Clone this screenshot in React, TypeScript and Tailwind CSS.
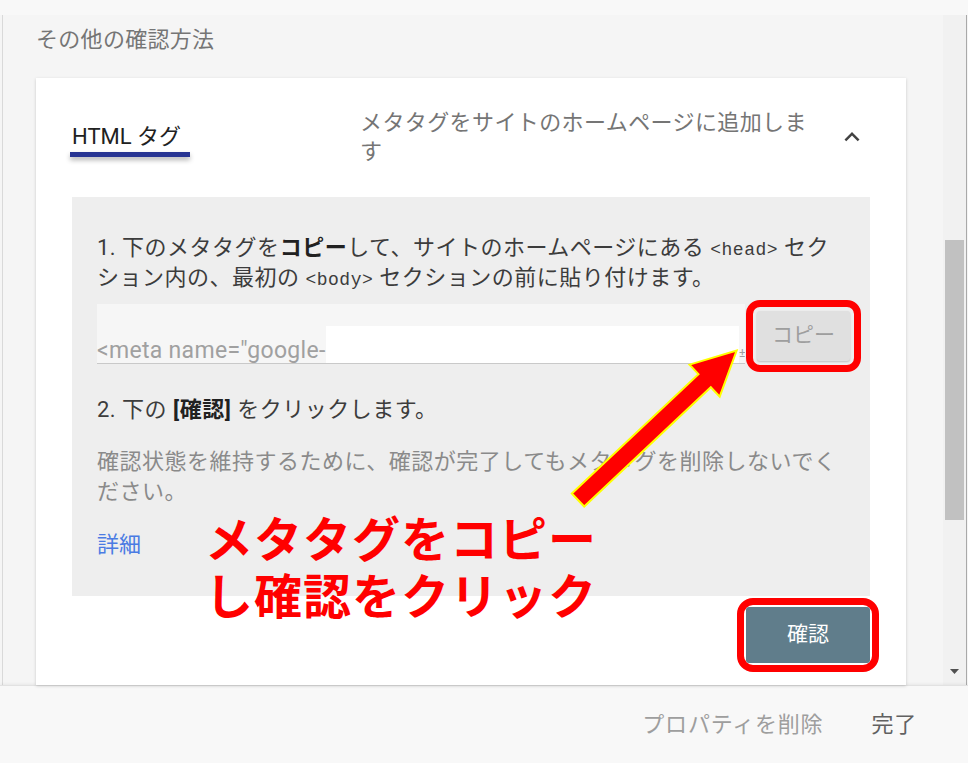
import React from 'react';

// Verification method panel: "HTML tag" option expanded, with callouts

const ChevronUp: React.FC = () => (
  <svg width="30" height="30" viewBox="0 0 24 24" fill="#424242">
    <path d="M12 8l-6 6 1.41 1.41L12 10.83l4.59 4.58L18 14z" />
  </svg>
);

const CalloutArrow: React.FC = () => (
  <svg
    className="absolute left-[519px] top-[257px] pointer-events-none"
    width="200"
    height="180"
    viewBox="0 0 200 180"
  >
    <g transform="translate(23 165) rotate(-43.3)">
      <polygon
        points="0,-9 174,-9 174,-22 218,0 174,22 174,9 0,9"
        fill="#ff0000"
        stroke="#ffff00"
        strokeWidth="2"
        strokeLinejoin="miter"
      />
    </g>
  </svg>
);

const Mono: React.FC<{ children: React.ReactNode }> = ({ children }) => (
  <span className="font-['Liberation_Mono',monospace] text-[18px] leading-none">{children}</span>
);

const App: React.FC = () => {
  return (
    <div className="w-[968px] h-[763px] overflow-hidden flex flex-col bg-[#f5f5f5] font-[Roboto,'Noto_Sans_CJK_JP',sans-serif] text-[22px]">
      <div className="h-[15px] shrink-0 bg-[#f8f8f8]" />

      <div className="flex-1 flex min-h-0">
        {/* scrolling content */}
        <div className="flex-1 ml-[2px] border-l border-[#d9d9d9] pl-[33px] flex flex-col min-h-0">
          <h2 className="pt-[11px] leading-[28px] tracking-[0.3px] text-[#757575] font-normal">その他の確認方法</h2>

          <div className="relative mt-[24px] w-[870px] flex-1 bg-white shadow-[0_1px_3px_rgba(0,0,0,0.18)] px-[36px] pt-[30px]">
            {/* accordion header */}
            <div className="flex items-start">
              <div className="w-[288px] mt-[15px] flex flex-col items-start">
                <span className="leading-[28px] text-[#212121]">HTML タグ</span>
                <div className="mt-[1px] -ml-[2px] w-[120px] h-[5px] bg-[#283593] shadow-[0_3px_5px_rgba(0,0,0,0.3)]" />
              </div>
              <p className="w-[450px] leading-[29px] tracking-[0.4px] text-[#757575]">
                メタタグをサイトのホームページに追加しま<br />す
              </p>
              <div className="ml-[27px] mt-[14px]">
                <ChevronUp />
              </div>
            </div>

            {/* instructions */}
            <div className="mt-[31px] bg-[#eeeeee] pl-[25px] pr-[9px] pt-[36px] pb-[36px]">
              <p className="leading-[30px] tracking-[0.5px] text-[#3c3c3c] whitespace-nowrap">
                1. 下のメタタグを<b className="font-bold text-[#212121]">コピー</b>して、サイトのホームページにある <Mono>&lt;head&gt;</Mono> セク<br />
                ション内の、最初の <Mono>&lt;body&gt;</Mono> セクションの前に貼り付けます。
              </p>

              <div className="mt-[7px] flex items-start">
                <div className="flex-1 mt-[4px] h-[60px] bg-[#f6f6f6] border-b border-[#c9c9c9] flex items-end">
                  <span className="leading-[24px] text-[23px] tracking-[0.3px] text-[#a0a0a0] whitespace-nowrap">&lt;meta name="google-</span>
                  <div className="flex-1 h-[37px] bg-white" />
                  <span className="w-[6px] text-[12px] leading-[20px] text-[#9e9e9e] overflow-hidden">±</span>
                </div>
                <div className="ml-[1px] border-[7px] border-[#ff0000] rounded-[14px] p-[4px]">
                  <button className="w-[93px] h-[50px] rounded-[3px] bg-[#e0e0e0] shadow-[0_1px_2px_rgba(0,0,0,0.2)] text-[21px] text-[#9e9e9e]">
                    コピー
                  </button>
                </div>
              </div>

              <p className="mt-[23px] leading-[30px] tracking-[0.5px] text-[#3c3c3c]">
                2. 下の <b className="font-bold text-[#212121]">[確認]</b> をクリックします。
              </p>

              <p className="mt-[22px] leading-[30px] tracking-[0.5px] text-[#8a8a8a] whitespace-nowrap">
                確認状態を維持するために、確認が完了してもメタタグを削除しないでく<br />ださい。
              </p>

              <a className="block mt-[23px] leading-[30px] text-[#4a7be3]">詳細</a>
            </div>

            <div className="flex justify-end">
              <div className="mt-[2px] -mr-[9px] border-[7px] border-[#ff0000] rounded-[16px] p-[2px]">
                <button className="w-[124px] h-[56px] rounded-[3px] bg-[#607d8b] text-white text-[21px]">
                  確認
                </button>
              </div>
            </div>

            {/* callout */}
            <div className="absolute left-[169px] top-[430px] font-['Noto_Sans_CJK_JP',sans-serif] font-bold text-[48px] leading-[57px] tracking-[1px] text-[#ff0000]">
              <div>メタタグをコピー</div>
              <div>し確認をクリック</div>
            </div>
            <CalloutArrow />
          </div>
        </div>

        {/* scrollbar */}
        <div className="w-[24px] mr-[1px] border-r border-[#a9a9a9] bg-[#f1f1f1] flex flex-col items-center">
          <div className="mt-[225px] w-[19px] h-[280px] bg-[#c1c1c1]" />
          <div className="flex-1" />
          <svg className="mb-[10px]" width="9" height="6" viewBox="0 0 9 6">
            <polygon points="0,0 9,0 4.5,5" fill="#505050" />
          </svg>
        </div>
      </div>

      {/* footer actions */}
      <div className="h-[78px] shrink-0 bg-[#f8f8f8] border-t border-[#e2e2e2] shadow-[0_-1px_3px_rgba(0,0,0,0.06)] flex items-center justify-end gap-[48px] pr-[51px] tracking-[0.8px]">
        <span className="text-[#9e9e9e]">プロパティを削除</span>
        <span className="text-[#616161]">完了</span>
      </div>
    </div>
  );
};

export default App;
